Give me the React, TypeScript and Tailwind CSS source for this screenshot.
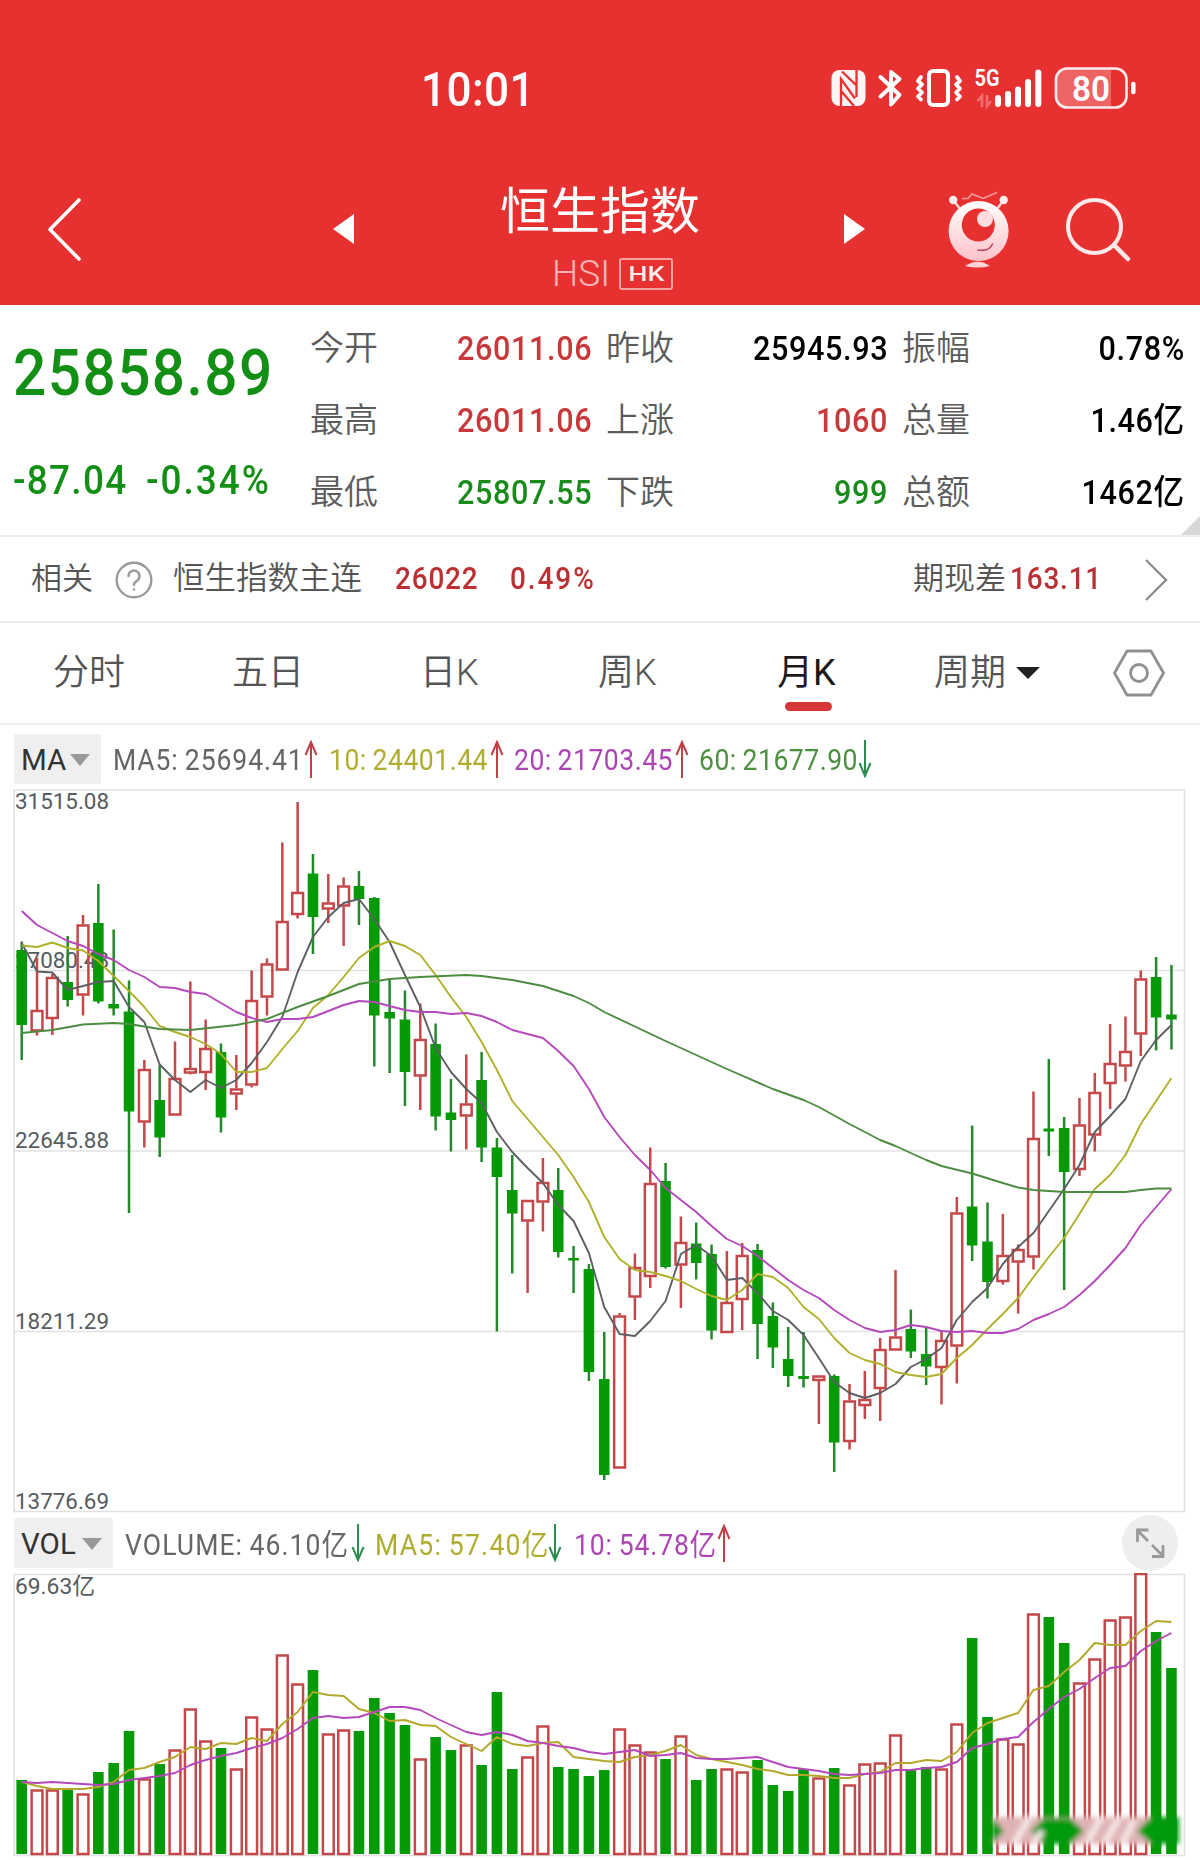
import clsx from "clsx";
import type { ReactNode } from "react";

const RED = "#c4474a";
const GREEN = "#069a08";

const STEP = 15.33;
const xAt = (i: number) => 21.7 + i * STEP;

// [up, high, bodyTop, bodyBottom, low, volumeTop]
const candles: number[][] = [
  [0, 941.5, 950, 1025, 1060, 1780],
  [1, 958, 1010, 1031.5, 1035.5, 1790],
  [1, 974, 977, 1019, 1035, 1790],
  [0, 936, 982, 1000, 1006.5, 1790],
  [1, 915, 924.5, 995.5, 1015.5, 1794],
  [0, 884, 923, 1001.5, 1003.5, 1772],
  [0, 929.5, 1004, 1008.5, 1015.5, 1763],
  [0, 980.5, 1011.5, 1111.5, 1213, 1731],
  [1, 1060, 1069, 1122.5, 1147.5, 1779],
  [0, 1065, 1100, 1137.5, 1157, 1764],
  [1, 1041.5, 1078, 1115.5, 1115.5, 1750],
  [1, 981.5, 1068, 1073.5, 1074.5, 1709],
  [1, 1019.5, 1048, 1073, 1090, 1741],
  [0, 1043.5, 1052, 1117.5, 1132.5, 1748],
  [1, 1055, 1088.5, 1094.5, 1110, 1769],
  [1, 970.5, 1000, 1085.5, 1087.5, 1717],
  [1, 958.5, 963.5, 997.5, 1015.5, 1729],
  [1, 842.5, 921, 970.5, 970.5, 1655],
  [1, 802, 892, 915, 918.5, 1684],
  [0, 854, 873.5, 917, 954, 1670],
  [1, 874, 902.5, 909.5, 923, 1734],
  [1, 877.5, 885.5, 906.5, 946, 1730],
  [0, 871, 886, 899, 925, 1731],
  [0, 897, 898, 1015.5, 1066.5, 1698],
  [0, 979.5, 1012, 1018.5, 1073, 1713],
  [0, 990.5, 1019.5, 1072, 1106, 1725],
  [1, 1003.5, 1039, 1076.5, 1110, 1759],
  [0, 1023.5, 1044, 1116.5, 1130.5, 1737],
  [0, 1079, 1112.5, 1120, 1151.5, 1750],
  [1, 1054.5, 1103.5, 1116.5, 1149.5, 1745],
  [0, 1052, 1080, 1147.5, 1162, 1765],
  [0, 1138, 1147.5, 1177, 1331.5, 1692],
  [0, 1155, 1190, 1213.5, 1273.5, 1769],
  [1, 1200, 1200, 1221.5, 1293, 1757],
  [1, 1158, 1182, 1202.5, 1231.5, 1726],
  [0, 1168, 1190, 1252, 1257.5, 1767],
  [0, 1246, 1258, 1260.5, 1293, 1769],
  [0, 1264, 1269, 1372, 1381, 1776],
  [0, 1332, 1379, 1475, 1480, 1770],
  [1, 1313, 1315.5, 1468.5, 1468.5, 1729],
  [1, 1253.5, 1267, 1297.5, 1320, 1745],
  [1, 1147.5, 1183, 1277, 1288, 1752],
  [0, 1163, 1181, 1267, 1268.5, 1759],
  [1, 1216.5, 1242, 1265.5, 1308, 1736],
  [0, 1222.5, 1243.5, 1263, 1279.5, 1780],
  [0, 1244.5, 1254, 1330.5, 1339.5, 1769],
  [1, 1251, 1302, 1333, 1333, 1769],
  [1, 1243, 1255, 1300, 1330, 1772],
  [0, 1244, 1250, 1324, 1359, 1760],
  [0, 1302.5, 1316, 1347.5, 1368, 1785],
  [0, 1327, 1359, 1376, 1387, 1791],
  [0, 1332, 1376, 1379, 1387.5, 1769],
  [1, 1375.5, 1375.5, 1381, 1424, 1778],
  [0, 1374.5, 1376, 1442.5, 1472, 1768],
  [1, 1384, 1400.5, 1442, 1449.5, 1785],
  [1, 1371, 1399, 1406, 1419, 1764],
  [1, 1338, 1349, 1389, 1421, 1763],
  [1, 1270, 1336.5, 1350.5, 1350.5, 1735],
  [0, 1309.5, 1329, 1351.5, 1358, 1769],
  [0, 1326.5, 1354, 1366.5, 1385, 1767],
  [1, 1331, 1340, 1368, 1404.5, 1769],
  [1, 1197, 1212.5, 1346.5, 1383.5, 1724],
  [0, 1125.5, 1206.5, 1245.5, 1261, 1638],
  [0, 1202.5, 1241.5, 1282, 1298.5, 1717],
  [1, 1214, 1255, 1282, 1284.5, 1739],
  [1, 1244.5, 1249, 1262.5, 1313.5, 1744],
  [1, 1091.5, 1138, 1257.5, 1269.5, 1614],
  [0, 1059, 1128.5, 1131.5, 1156, 1617],
  [0, 1117, 1128, 1172, 1290, 1643],
  [1, 1098, 1124.5, 1170, 1176, 1683],
  [1, 1073, 1092, 1135.5, 1151.5, 1659],
  [1, 1024, 1063, 1084, 1109, 1620],
  [1, 1016.5, 1051, 1066.5, 1081.5, 1617],
  [1, 970.5, 978.5, 1034.5, 1056, 1573.5],
  [0, 957, 977, 1017.5, 1050.5, 1632],
  [0, 965, 1014.5, 1019.5, 1049.5, 1668],
];

const ma5 = [
  943, 971.5, 972.5, 990, 986, 982, 981, 1007, 1022, 1064.5, 1080, 1092, 1080, 1088, 1080, 1063, 1042, 1017, 972, 937, 917, 903, 899, 919, 942,
  975, 1007, 1048, 1072, 1089, 1103, 1132, 1152, 1168, 1183, 1205, 1221, 1253, 1307, 1334, 1336, 1321, 1301, 1254, 1245, 1256, 1280, 1278, 1293,
  1311, 1320, 1335, 1358, 1382, 1393, 1398, 1393, 1384, 1367, 1359, 1348, 1320, 1302, 1288, 1264, 1247, 1233, 1211, 1189, 1165, 1132, 1116, 1099,
  1061, 1040, 1025,
];
const ma10 = [
  945.5, 947, 942.5, 948, 950.5, 961, 976, 991, 1007, 1026, 1032, 1037, 1044, 1054, 1072, 1072, 1068, 1049, 1031, 1008, 995, 977, 958, 947, 941,
  946, 955, 975, 997, 1017, 1042, 1070, 1101, 1119, 1137, 1155, 1177, 1202, 1237, 1259, 1270, 1272, 1276, 1281, 1289, 1296, 1300, 1290, 1274,
  1277, 1288, 1307, 1319, 1338, 1353, 1360, 1364, 1372, 1375, 1377, 1374, 1358, 1345, 1329, 1314, 1298, 1277, 1257, 1238, 1214, 1189, 1175, 1155,
  1124, 1101, 1078,
];
const ma20 = [
  911, 925, 933, 941, 946, 954, 960, 970, 977, 987, 988, 992, 994, 1003, 1012, 1018, 1022, 1019, 1019, 1017, 1011, 1005, 1001, 1002, 1006, 1010,
  1012, 1012, 1014, 1013, 1016, 1022, 1030, 1034, 1038, 1051, 1066, 1089, 1117, 1137, 1155, 1170, 1188, 1200, 1212, 1226, 1239, 1246, 1256, 1268,
  1280, 1290, 1298, 1310, 1320, 1328, 1332, 1330, 1325, 1327, 1331, 1332, 1331, 1333, 1333, 1329, 1320, 1314, 1307, 1295, 1281, 1265, 1248, 1225,
  1207, 1189,
];
// slow line, only the turning points as [index, y]
const ma60 = [
  [0, 1033], [2, 1030], [4, 1024.5], [6, 1023], [7, 1024], [9, 1029], [11, 1030], [14, 1025], [16, 1019], [18, 1007], [20, 996], [22, 984],
  [24, 979], [26, 977], [29, 975], [30, 976], [32, 980], [34, 986], [36, 996], [37, 1003], [38, 1012], [42, 1041], [46, 1069], [49, 1089],
  [51, 1100], [52, 1107], [54, 1124], [56, 1140], [57, 1146], [59, 1160], [60, 1166], [62, 1173.5], [64, 1183], [65, 1187.5], [66, 1190],
  [68, 1192], [72, 1192], [73, 1190], [74, 1188.5], [75, 1188.5],
];
const vol5 = [
  1782, 1786, 1789, 1789, 1789, 1787, 1782, 1770, 1768, 1762, 1757, 1747, 1749, 1743, 1744, 1738, 1741, 1724, 1712, 1692, 1695, 1696, 1709, 1713,
  1721, 1720, 1725, 1726, 1737, 1744, 1751, 1737, 1744, 1746, 1743, 1742, 1757, 1759, 1761, 1762, 1757, 1755, 1751, 1745, 1755, 1759, 1762, 1765,
  1769, 1771, 1775, 1775, 1776, 1778, 1778, 1774, 1772, 1763, 1763, 1760, 1761, 1752, 1733, 1723, 1718, 1713, 1690, 1686, 1672, 1660, 1643, 1645,
  1645, 1631, 1621, 1622,
];
const vol10 = [
  1782, 1783, 1782, 1783, 1784, 1785, 1784, 1780, 1778, 1776, 1773, 1765, 1760, 1756, 1753, 1748, 1744, 1738, 1729, 1718, 1716, 1718, 1717, 1712,
  1707, 1707, 1710, 1718, 1725, 1732, 1735, 1732, 1735, 1741, 1743, 1746, 1748, 1752, 1754, 1752, 1750, 1756, 1755, 1753, 1758, 1759, 1759, 1758,
  1757, 1762, 1767, 1769, 1771, 1774, 1775, 1774, 1773, 1770, 1770, 1768, 1767, 1762, 1748, 1744, 1739, 1737, 1722, 1709, 1697, 1689, 1678, 1668,
  1666, 1651, 1641, 1633,
];

const toPoints = (ys: number[]) => ys.map((y, i) => `${xAt(i)},${y}`).join(" ");

function Num({ children, className, right }: { children: ReactNode; className?: string; right?: boolean }) {
  return (
    <span className={clsx("inline-block whitespace-nowrap scale-x-90", right ? "origin-right" : "origin-left", className)}>{children}</span>
  );
}

function StatusIcons() {
  return (
    <svg width="320" height="50" viewBox="823 64 320 50" fill="none" stroke="#fff" className="shrink-0">
      {/* nfc */}
      <rect x="830.5" y="70" width="34" height="36" rx="8" fill="#fff" fillOpacity=".95" stroke="none" />
      <path d="M840 107V79l14 19.500M855.500 69v28M841 71.500l14.500 14M840.500 91.500L853 106" stroke="#e73030" strokeWidth="2.300" />
      {/* bluetooth */}
      <path d="M879.500 77l19 18-8.500 9.500V72l8.500 7-19 17.500" strokeWidth="4" strokeLinejoin="round" strokeLinecap="round" />
      {/* vibrate */}
      <rect x="928" y="71" width="19" height="34" rx="4" strokeWidth="4" />
      <path d="M920 77l-3 4 4 3.500-4 4 4 4-4 4 3 3M956 77l3 4-4 3.500 4 4-4 4 4 4-3 3" strokeWidth="3.800" strokeLinecap="round" strokeLinejoin="round" />
      <text x="973.500" y="86" textLength="25" lengthAdjust="spacingAndGlyphs" fontSize="23" fontWeight="600" fill="#fff" stroke="none">
        5G
      </text>
      <path d="M981 107V96l-4.500 5M986 95v11l4-5" strokeWidth="2.800" strokeOpacity=".3" />
      <path d="M997 98v6M1007 94v10M1017 89.500v14.500M1027 82v22M1037.300 72.500v31.500" strokeWidth="6" strokeLinecap="round" />
      {/* battery */}
      <path d="M1066 69h44v38h-44a10 10 0 0 1-10-10V79a10 10 0 0 1 10-10z" fill="#fff" fillOpacity=".25" stroke="none" />
      <rect x="1055" y="68.500" width="70.500" height="39" rx="11" strokeWidth="2.600" strokeOpacity=".9" />
      <path d="M1132.300 84v8" strokeWidth="4.500" strokeLinecap="round" />
      <text x="1071" y="100.500" textLength="38" lengthAdjust="spacingAndGlyphs" fontSize="35" fontWeight="600" fill="#fff" stroke="none">
        80
      </text>
    </svg>
  );
}

function Mascot() {
  return (
    <svg width="64" height="80" viewBox="946 189 64 80" fill="none" className="shrink-0">
      <defs>
        <linearGradient id="body" x1="0" y1="0" x2="0" y2="1">
          <stop offset="0" stopColor="#fff" />
          <stop offset=".45" stopColor="#ffe3e4" />
          <stop offset="1" stopColor="#ffc2ca" />
        </linearGradient>
      </defs>
      <path d="M953 201l6 8M1002 201l-6 8" stroke="#ffd9da" strokeWidth="2.200" />
      <circle cx="952.200" cy="200" r="4.200" fill="#ffeeee" />
      <circle cx="1002.700" cy="200" r="4.200" fill="#ffeeee" />
      <path d="M961 198.500h6l4-4.500 11 4.500 14-6" stroke="#f79c9c" strokeWidth="1.500" />
      <circle cx="977.600" cy="231" r="30" fill="url(#body)" />
      <circle cx="977.300" cy="225" r="16.500" fill="#e73030" />
      <circle cx="984" cy="219" r="8" fill="#ffdcdf" />
      <path d="M977 250q11 2 14.500-6" stroke="#b8475a" strokeWidth="1.600" strokeLinecap="round" />
      <path d="M964 266q13-8.500 25 0-12 3-25 0z" fill="#ffd5d8" />
    </svg>
  );
}

function Header() {
  return (
    <header className="h-[305px] bg-[#e73030] text-white">
      <div className="flex h-[178px] items-center pl-[421px]">
        <div className="w-[403px] text-[49px] leading-none font-medium">
          <Num className="tracking-[0.01em]">10:01</Num>
        </div>
        <StatusIcons />
      </div>
      <div className="flex h-[127px] items-start pl-[45px]">
        <svg width="40" height="66" viewBox="0 0 40 66" fill="none" stroke="#fff" strokeWidth="3.6" strokeLinecap="round" strokeLinejoin="round" className="mt-[18px]">
          <path d="M34 4L5 33.500 34 63" />
        </svg>
        <svg width="22" height="32" viewBox="0 0 22 32" fill="#fff" className="mt-[35px] ml-[248px]">
          <path d="M0 16L21 1v30z" />
        </svg>
        <div className="ml-[95px] flex w-[300px] flex-col items-center">
          <h1 className="mt-[4px] text-[50px] leading-[60px] font-normal">恒生指数</h1>
          <div className="mt-[15px] flex items-center gap-[9px] pl-[25px]">
            <span className="text-[37px] leading-[34px] font-light text-white/65">HSI</span>
            <span className="flex h-[32px] w-[54px] items-center justify-center rounded-[3px] border-2 border-white/55">
              <span className="scale-x-135 text-[20px] leading-none font-medium text-white/90">HK</span>
            </span>
          </div>
        </div>
        <svg width="22" height="32" viewBox="0 0 22 32" fill="#fff" className="mt-[35px] ml-[93px]">
          <path d="M22 16L1 1v30z" />
        </svg>
        <div className="mt-[11px] ml-[82px]">
          <Mascot />
        </div>
        <svg width="70" height="70" viewBox="1062 195 70 70" fill="none" stroke="#ffe9e9" strokeLinecap="round" className="mt-[17px] ml-[52px]">
          <circle cx="1093.500" cy="226.500" r="26.500" strokeWidth="4" />
          <path d="M1113 245l14 14" strokeWidth="4.500" />
        </svg>
      </div>
    </header>
  );
}

const quoteRows = [
  [
    ["今开", "26011.06", "text-[#c8393c]"],
    ["昨收", "25945.93", "text-black"],
    ["振幅", "0.78%", "text-black"],
  ],
  [
    ["最高", "26011.06", "text-[#c8393c]"],
    ["上涨", "1060", "text-[#c8393c]"],
    ["总量", "1.46亿", "text-black"],
  ],
  [
    ["最低", "25807.55", "text-[#1b8a1d]"],
    ["下跌", "999", "text-[#1b8a1d]"],
    ["总额", "1462亿", "text-black"],
  ],
];

function Quote() {
  return (
    <section className="relative flex h-[232px] border-b-2 border-[#eeeeee] pt-[7px]">
      <div className="w-[310px] pl-[13px] font-medium text-[#148f16]">
        <div className="h-[120px] pt-[26px] text-[65px] leading-[70px]">
          <Num className="tracking-[0.025em]">25858.89</Num>
        </div>
        <div className="flex h-[60px] pt-[18px] text-[41px] leading-[60px]">
          <div className="w-[133px]">
            <Num className="tracking-[0.035em]">-87.04</Num>
          </div>
          <Num className="tracking-[0.055em]">-0.34%</Num>
        </div>
      </div>
      <div className="flex-1">
        {quoteRows.map((row) => (
          <div key={row[0][0]} className="flex h-[72px] items-center gap-[15px]">
            {row.map(([label, value, color]) => (
              <div key={label} className="flex w-[281px] items-center justify-between">
                <span className="text-[34px] leading-none font-[350] text-[#5c5c5c]">{label}</span>
                <Num right className={clsx("mr-[-1.5px] pb-px text-[34px] leading-none font-medium tracking-[0.02em]", color)}>
                  {value}
                </Num>
              </div>
            ))}
          </div>
        ))}
      </div>
      <svg width="19" height="19" viewBox="0 0 19 19" className="absolute right-0 bottom-0">
        <path d="M19 0v19H0z" fill="#d8d8d8" />
      </svg>
    </section>
  );
}

function Related() {
  return (
    <section className="flex h-[86px] items-center border-b-2 border-[#eeeeee] pl-[31px] text-[31px] leading-none text-[#555]">
      <span className="w-[84px] pb-px font-[350]">相关</span>
      <svg width="38" height="38" viewBox="0 0 38 38" fill="none" stroke="#999" strokeWidth="2.4" className="mt-[2px]">
        <circle cx="19" cy="19" r="17.300" />
        <path d="M13.500 15a5.500 5.500 0 1 1 8.500 4.700c-2 1.300-3 2-3 4.300" strokeLinecap="round" />
        <circle cx="19" cy="28.500" r="1.300" fill="#999" stroke="none" />
      </svg>
      <span className="ml-[20px] w-[222px] pb-px text-[31.5px] font-[350]">恒生指数主连</span>
      <span className="w-[115px] pb-[2px] font-medium text-[#bb3033]">
        <Num className="tracking-[0.03em]">26022</Num>
      </span>
      <span className="w-[403px] pb-[2px] font-medium text-[#bb3033]">
        <Num className="tracking-[0.07em]">0.49%</Num>
      </span>
      <span className="w-[97px] pb-px font-[350]">期现差</span>
      <span className="w-[133px] pb-[2px] font-medium text-[#bb3033]">
        <Num className="tracking-[0.03em]">163.11</Num>
      </span>
      <svg width="26" height="44" viewBox="0 0 26 44" fill="none" stroke="#8e8e8e" strokeWidth="2.4" className="mt-[2px]">
        <path d="M3 2l20 20L3 42" />
      </svg>
    </section>
  );
}

function Tabs() {
  return (
    <nav className="flex h-[102px] items-center border-b-2 border-[#eeeeee] pl-[53px] text-[36px] leading-none font-[350] text-[#555]">
      <span className="w-[179px]">分时</span>
      <span className="w-[188px]">五日</span>
      <span className="w-[178px]">日K</span>
      <span className="w-[179px]">周K</span>
      <span className="relative w-[157px] font-normal text-[#1a1a1a]">
        月K
        <i className="absolute top-[47px] left-[8px] h-[9px] w-[47px] rounded-full bg-[#d63638]" />
      </span>
      <span>周期</span>
      <svg width="26" height="14" viewBox="0 0 26 14" className="ml-[9px]">
        <path d="M1 1h24L13 13z" fill="#222" />
      </svg>
      <svg width="52" height="48" viewBox="0 0 52 48" fill="none" stroke="#909090" strokeWidth="2.8" strokeLinejoin="round" className="ml-[72px]">
        <path d="M14 2h24l12.500 22L38 46H14L1.500 24z" />
        <circle cx="26" cy="24" r="8.500" />
      </svg>
    </nav>
  );
}

function Arrow({ down }: { down?: boolean }) {
  return (
    <svg width="14" height="38" viewBox="0 0 14 38" fill="none" stroke={down ? "#2c8c50" : "#c23f45"} strokeWidth="2" className={clsx("shrink-0", down && "rotate-180")}>
      <path d="M7 38V2M1.500 15L7 2l5.500 13" />
    </svg>
  );
}

function Picker({ label, className }: { label: string; className: string }) {
  return (
    <button className={clsx("flex h-[50px] shrink-0 items-center justify-between rounded-[3px] bg-[#efefef] pr-[11px] pl-[7px] leading-none text-[#333]", className)}>
      <span className="pt-[4px]">{label}</span>
      <svg width="20" height="12" viewBox="0 0 20 12" className="mt-[2px]">
        <path d="M0 0h20L10 12z" fill="#999" />
      </svg>
    </button>
  );
}

function Legend({ text, className, down }: { text: string; className: string; down?: boolean }) {
  return (
    <div className={clsx("flex shrink-0 items-center justify-between", className)}>
      <span className="w-0 pt-[5px]">
        <Num className="[word-spacing:-0.05em]">{text}</Num>
      </span>
      <Arrow down={down} />
    </div>
  );
}

function AxisLabel({ y, w = 94, children }: { y: number; w?: number; children: string }) {
  return (
    <text x="15" y={y} fontSize="22.500" fill="#555b60" textLength={w} lengthAdjust="spacingAndGlyphs">
      {children}
    </text>
  );
}

function PriceChart() {
  return (
    <svg width="1200" height="723" viewBox="0 789 1200 723" fill="none" className="block overflow-visible">
      <path d="M14 790h1170.500v721.500H14z M14 970.500h1170 M14 1151h1170 M14 1331.500h1170" stroke="#e2e2e2" strokeWidth="1.600" />
      <AxisLabel y={809}>31515.08</AxisLabel>
      <AxisLabel y={967.5}>27080.48</AxisLabel>
      <AxisLabel y={1148}>22645.88</AxisLabel>
      <AxisLabel y={1329}>18211.29</AxisLabel>
      <AxisLabel y={1509}>13776.69</AxisLabel>
      {candles.map(([up, high, top, bottom, low], i) => {
        const x = xAt(i);
        return up ? (
          <g key={i} stroke={RED} strokeWidth="2.500">
            <path d={`M${x} ${high}V${top}M${x} ${bottom}V${low}`} />
            <rect x={x - 5.4} y={top + 1} width="10.800" height={bottom - top - 2} />
          </g>
        ) : (
          <g key={i}>
            <path d={`M${x} ${high}V${low}`} stroke="#23882a" strokeWidth="2.500" />
            <rect x={x - 5.3} y={top} width="10.600" height={bottom - top} fill={GREEN} />
          </g>
        );
      })}
      <g strokeWidth="1.900" strokeLinejoin="round">
        <polyline points={toPoints(ma5)} stroke="#5c6064" />
        <polyline points={toPoints(ma10)} stroke="#b0b02a" />
        <polyline points={toPoints(ma20)} stroke="#b548ba" />
        <polyline points={ma60.map(([i, y]) => `${xAt(i)},${y}`).join(" ")} stroke="#4c8c40" />
      </g>
    </svg>
  );
}

function VolumeChart() {
  return (
    <svg width="1200" height="287" viewBox="0 1573 1200 287" fill="none" className="block">
      <defs>
        <filter id="soft" x="-20%" y="-50%" width="140%" height="200%">
          <feGaussianBlur stdDeviation="2.5" />
        </filter>
      </defs>
      <path d="M14 1574.500h1170.500v281H14z" stroke="#e2e2e2" strokeWidth="1.600" />
      <AxisLabel y={1594} w={80}>
        69.63亿
      </AxisLabel>
      {candles.map(([up, , , , , top], i) =>
        up ? (
          <rect key={i} x={xAt(i) - 5.4} y={top + 0.5} width="10.800" height={1853.5 - top} stroke={RED} strokeWidth="2.500" />
        ) : (
          <rect key={i} x={xAt(i) - 5.3} y={top} width="10.600" height={1854 - top} fill={GREEN} />
        ),
      )}
      <g strokeWidth="1.900" strokeLinejoin="round">
        <polyline points={toPoints(vol5)} stroke="#b3a82c" />
        <polyline points={toPoints(vol10)} stroke="#b548ba" />
      </g>
      <g filter="url(#soft)">
        <rect x="994" y="1817" width="184" height="27" fill="#dfb3b5" />
        <path d="M992 1817l12 14-12 13zM1031 1831l13-13h26l14 13-14 13h-26zM1137 1831l14-14h28v27h-28z" fill={GREEN} />
        <path d="M1014 1844l16-28M1034 1843l8-12M1086 1844l16-28M1104 1844l16-28M1122 1844l12-24" stroke="#f6e8e8" strokeWidth="6" />
      </g>
    </svg>
  );
}

export default function App() {
  return (
    <div className="h-[1860px] w-[1200px] overflow-hidden bg-white font-[Roboto,'Noto_Sans_CJK_SC',sans-serif]">
      <Header />
      <Quote />
      <Related />
      <Tabs />
      <div className="flex h-[64px] items-center pt-[3px] pl-[14px] text-[29.5px] leading-none">
        <Picker label="MA" className="w-[87px]" />
        <Legend text="MA5: 25694.41" className="ml-[12px] w-[205px] tracking-[0.034em] text-[#666]" />
        <Legend text="10: 24401.44" className="ml-[11px] w-[175px] tracking-[0.019em] text-[#aead2f]" />
        <Legend text="20: 21703.45" className="ml-[10px] w-[175px] tracking-[0.019em] text-[#ad44b3]" />
        <Legend text="60: 21677.90" className="ml-[10px] w-[173px] tracking-[0.019em] text-[#4b8f3f]" down />
      </div>
      <PriceChart />
      <div className="flex h-[61px] items-center pt-px pl-[14px] text-[29.5px] leading-none">
        <Picker label="VOL" className="w-[99px]" />
        <Legend text="VOLUME: 46.10亿" className="ml-[12px] w-[240px] tracking-[0.041em] text-[#666]" down />
        <Legend text="MA5: 57.40亿" className="ml-[10px] w-[187px] tracking-[0.048em] text-[#aead2f]" down />
        <Legend text="10: 54.78亿" className="ml-[12px] w-[157px] tracking-[0.031em] text-[#ad44b3]" />
        <svg width="56" height="56" viewBox="0 0 56 56" fill="none" stroke="#999" strokeWidth="2.8" className="ml-[391px] shrink-0">
          <circle cx="28" cy="28" r="28" fill="#eeeeee" stroke="none" />
          <path d="M26 26L15.500 15.500M15.500 27V15h11M30 30l11 11M41 30v11.500H30" />
        </svg>
      </div>
      <VolumeChart />
    </div>
  );
}
